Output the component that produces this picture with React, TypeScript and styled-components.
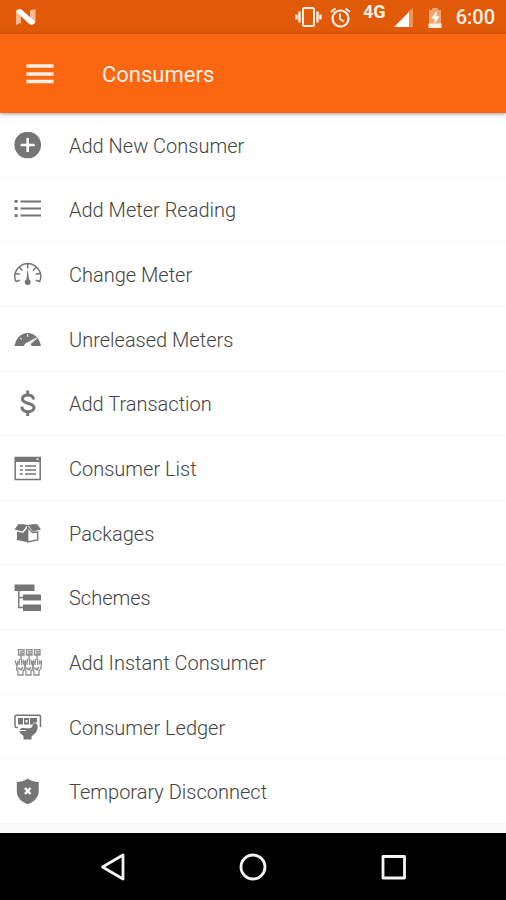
import React from "react";
import styled, { createGlobalStyle } from "styled-components";

const GlobalStyle = createGlobalStyle`
  * { box-sizing: border-box; }
  body {
    margin: 0;
    background: #fff;
    font-family: Roboto, "Liberation Sans", sans-serif;
  }
  button { font: inherit; border: 0; padding: 0; background: none; cursor: pointer; }
`;

const Screen = styled.div`
  display: flex;
  flex-direction: column;
  min-height: 100vh;
`;

const StatusBar = styled.div`
  display: flex;
  align-items: center;
  justify-content: space-between;
  height: 34px;
  padding: 0 11px 0 15px;
  background: #e05a09;
  color: #fff0e6;
`;

const StatusGroup = styled.div`
  display: flex;
  align-items: center;
`;

const StatusIcon = styled.svg<{ $gap?: number }>`
  display: block;
  flex: none;
  margin-right: ${(p) => p.$gap ?? 0}px;
`;

const Network = styled.span`
  align-self: flex-start;
  margin-right: 7px;
  font-size: 18px;
  line-height: 26px;
  font-weight: 700;
`;

const Clock = styled.time`
  font-size: 20px;
  line-height: 36px;
  font-weight: 500;
`;

const AppBar = styled.header`
  position: relative;
  display: flex;
  align-items: center;
  gap: 48px;
  height: 79px;
  padding: 0 26px;
  background: #fb6611;
  color: #fff0e6;
  box-shadow: 0 1px 4px rgba(0, 0, 0, 0.4);
`;

const MenuButton = styled.button`
  display: block;
  color: inherit;
  svg { display: block; }
`;

const Title = styled.h1`
  margin: 0;
  padding-top: 2px;
  font-size: 22px;
  line-height: 32px;
  font-weight: 400;
`;

const Main = styled.main`
  display: flex;
  flex: 1;
  padding-bottom: 9px;
  background: linear-gradient(#fff, #fff) content-box, #fafafa;
`;

const Menu = styled.ul`
  display: grid;
  grid-auto-rows: 1fr;
  flex: 1;
  margin: 0;
  padding: 0;
  list-style: none;
`;

const MenuItem = styled.li`
  display: flex;
  border-bottom: 1px solid #f4f4f4;
`;

const MenuRow = styled.button`
  display: flex;
  flex: 1;
  align-items: center;
  gap: 27px;
  padding: 2px 14px 0;
  color: #444;
  text-align: left;
`;

const Icon = styled.svg`
  display: block;
  flex: none;
  width: 28px;
  height: 28px;
  color: #757575;
`;

const Label = styled.span`
  font-size: 20px;
  line-height: 28px;
  font-weight: 300;
`;

const NavBar = styled.nav`
  display: flex;
  justify-content: center;
  height: 67px;
  background: #000;
`;

const NavButton = styled.button`
  display: flex;
  flex: 0 1 140px;
  align-items: center;
  justify-content: center;
  color: #f4f4f4;
`;

const hand = (x: number) => (
  <g key={x} transform={`translate(${x} 0)`}>
    <path d="M4.500 1.500h5.500v5.500H4.500zM7 7v5M6 3l3 3M9 3L6 6" />
    <path d="M1 12.500l2 6-.5 3 1.500 2v3.500h5v-4l2-3 .5-7-2 2.500v-3M3 18l1-5M5 17l.5-6M7.500 17l.3-6M4 20l3 2 2-3" />
    <path d="M3 19h6v3H4z" fill="currentColor" stroke="none" opacity="0.400" />
  </g>
);

const items: { label: string; icon: React.ReactNode }[] = [
  {
    label: "Add New Consumer",
    icon: (
      <>
        <circle cx="13.700" cy="13" r="13.300" fill="currentColor" />
        <path d="M13.700 6v14M6.700 13h14" stroke="#fff" strokeWidth="2.600" />
      </>
    ),
  },
  {
    label: "Add Meter Reading",
    icon: (
      <>
        <path d="M6.500 5.500H27M6.500 12.500H27M6.500 19.500H27" stroke="currentColor" strokeWidth="1.900" />
        <path d="M.5 5.300h3.200M.5 12.500h3.200M.5 19.700h3.200" stroke="currentColor" strokeWidth="2.800" />
      </>
    ),
  },
  {
    label: "Change Meter",
    icon: (
      <>
        <path
          d="M1.800 20.500C-.8 14 1.500 8 6.500 4.800a13.500 13.500 0 0 1 14.500 0c5 3.200 7.300 9.200 4.700 15.700l-4-1.300M1.800 20.500l4-1.300M1.500 12.500l4.300.7M5.500 6.500l3 3M13.700 3v4.500M22 6.500l-3 3M26 12.500l-4.300.7"
          fill="none"
          stroke="currentColor"
          strokeWidth="1.500"
        />
        <path d="M13.700 8l1.400 10.500a3 3 0 1 1-2.800 0z" fill="currentColor" />
      </>
    ),
  },
  {
    label: "Unreleased Meters",
    icon: (
      <>
        <path d="M.6 20C2 12 7 7 13.700 7S25.500 12 27 20h-9.500a4 4 0 0 0-1-2.500L23 11l-9 5.200c-2.200.2-3.600 1.600-4 3.800z" fill="currentColor" />
        <path d="M13.700 8v3M6 12l2 1.500M17 17.500l7-6.500" stroke="#fff" strokeWidth="1" />
      </>
    ),
  },
  {
    label: "Add Transaction",
    icon: (
      <path
        d="M13.700.5v5M13.700 21v5M19.500 9.500c-.2-3-2.400-4.600-5.700-4.600-3.200 0-5.300 1.500-5.300 4.100 0 5.700 11.500 3.300 11.500 8.500 0 2.500-2.500 4.200-6 4.200-3.800 0-6-1.800-6.300-5"
        fill="none"
        stroke="currentColor"
        strokeWidth="3"
      />
    ),
  },
  {
    label: "Consumer List",
    icon: (
      <>
        <path d="M1.200 2.500h25v22h-25z" fill="none" stroke="currentColor" strokeWidth="1.500" />
        <path d="M1 2h25.500v5H1z" fill="currentColor" />
        <path d="M22.500 4.300h2" stroke="#fff" strokeWidth="1.500" />
        <path d="M5.800 11h3M11 11h11M5.800 15h3M11 15h11M5.800 19h3M11 19h11" stroke="currentColor" strokeWidth="1.600" />
      </>
    ),
  },
  {
    label: "Packages",
    icon: (
      <>
        <path d="M4.500 4L13 5.500l-4.500 6L.5 9.500zM23 4L14.500 5.500 19 11.500l8-2z" fill="currentColor" />
        <path d="M3 11.500l6 1.500L13.700 7.500v14.800L3 20z" fill="currentColor" />
        <path d="M13.700 7v15l10-2V12L18.500 12.500z" fill="#fff" stroke="currentColor" strokeWidth="1.400" />
        <path d="M7 4.500l7 1.200L20.500 4.500" fill="none" stroke="currentColor" strokeWidth="1.200" />
      </>
    ),
  },
  {
    label: "Schemes",
    icon: (
      <>
        <path d="M.5.500h20v6.500H.5zM9 10.500h18v6H9zM9 20.500h18V27H9z" fill="currentColor" />
        <path d="M4.800 6v17.500H9M4.800 13.500H9" fill="none" stroke="currentColor" strokeWidth="1.400" />
      </>
    ),
  },
  {
    label: "Add Instant Consumer",
    icon: (
      <g fill="none" stroke="currentColor" strokeWidth="1.300" opacity="0.800" transform="translate(0 -1)">
        {[0, 8, 16].map(hand)}
      </g>
    ),
  },
  {
    label: "Consumer Ledger",
    icon: (
      <>
        <path d="M4 13.500H2.500a1.500 1.500 0 0 1-1.500-1.500V2.700a1.500 1.500 0 0 1 1.500-1.500h22.500a1.500 1.500 0 0 1 1.500 1.500V13" fill="none" stroke="currentColor" strokeWidth="1.500" />
        <path d="M4 4h5v6.500H4zM10 4h5v6.500h-5zM16 4h7v4.500h-3.500v2H16z" fill="currentColor" />
        <path d="M11.500 6h2v2.500h-2z" fill="#fff" />
        <path d="M6.500 14.500c4-1.500 7 .5 10-.5 2.500-.7 2-5 5-5 3.500 2 2 7 .5 9.500l-4.500 4V25.500H9.500v-3.500L6 19c-.8-2 0-3.500.5-4.500z" fill="currentColor" />
        <path d="M6 16.500h6" stroke="#fff" strokeWidth="1" />
      </>
    ),
  },
  {
    label: "Temporary Disconnect",
    icon: (
      <>
        <path d="M13.700.5c3 2.300 6.500 3.300 11 3.500v9c0 6.300-4.500 10.800-11 13.200C7.200 23.800 2.800 19.300 2.800 13V4c4.400-.2 7.900-1.200 10.900-3.500z" fill="currentColor" />
        <path d="M11 10l5.500 6M16.500 10L11 16" stroke="#fff" strokeWidth="2.500" />
      </>
    ),
  },
];

export default function App() {
  return (
    <Screen>
      <GlobalStyle />
      <StatusBar>
        <StatusIcon width="22" height="18" viewBox="0 0 22 18" aria-hidden="true">
          <path d="M1 3.500L6 2v13l-5 2zM15 2.500L20.500 1v13L15 16z" fill="#ffb98f" />
          <path d="M1 3.500C2 1 5 .3 7 2l13.500 12c-1.500 3-4.500 3.500-6.500 1.800z" fill="#fff" />
        </StatusIcon>
        <StatusGroup>
          <StatusIcon $gap={8} width="27" height="22" viewBox="0 0 27 22" fill="none" stroke="currentColor" aria-hidden="true">
            <rect x="8" y="2" width="11" height="18" rx="1.500" strokeWidth="2" />
            <path d="M4.500 5.500v11M22.500 5.500v11M1.500 8.500v5M25.500 8.500v5" strokeWidth="2.400" />
          </StatusIcon>
          <StatusIcon $gap={12} width="21" height="22" viewBox="0 0 21 22" fill="none" stroke="currentColor" aria-hidden="true">
            <circle cx="10.500" cy="12.500" r="8" strokeWidth="2.200" />
            <path d="M10 7.500v5.500l4 2.500M1 6L5.500 2.500M20 6L15.500 2.500" strokeWidth="2" />
          </StatusIcon>
          <Network>4G</Network>
          <StatusIcon $gap={14} width="21" height="20" viewBox="0 0 21 20" aria-hidden="true">
            <path d="M15 5l5-4v19h-5z" fill="#f2924f" />
            <path d="M1 20L16 5v15z" fill="#fff" />
          </StatusIcon>
          <StatusIcon $gap={14} width="14" height="21" viewBox="0 0 14 21" aria-hidden="true">
            <path d="M4 1h6v2h3v14H1V3h3z" fill="#f2a36e" />
            <path d="M.5 16.500h13V21H.5z" fill="#fff0e6" />
            <path d="M8.500 4L3.500 11.500h3V17l5-7.500h-3z" fill="#fff" />
          </StatusIcon>
          <Clock>6:00</Clock>
        </StatusGroup>
      </StatusBar>
      <AppBar>
        <MenuButton aria-label="Open menu">
          <svg width="28" height="24" viewBox="0 0 28 24" aria-hidden="true">
            <path d="M.5 4h27M.5 12h27M.5 19.500h27" stroke="currentColor" strokeWidth="3.500" />
          </svg>
        </MenuButton>
        <Title>Consumers</Title>
      </AppBar>
      <Main>
        <Menu>
          {items.map((item) => (
            <MenuItem key={item.label}>
              <MenuRow>
                <Icon viewBox="0 0 28 28" aria-hidden="true">{item.icon}</Icon>
                <Label>{item.label}</Label>
              </MenuRow>
            </MenuItem>
          ))}
        </Menu>
      </Main>
      <NavBar>
        <NavButton aria-label="Back">
          <svg width="28" height="28" viewBox="0 0 28 28" fill="none" stroke="currentColor" strokeWidth="2.800" strokeLinejoin="round">
            <path d="M24 2v24L3.500 14z" />
          </svg>
        </NavButton>
        <NavButton aria-label="Home">
          <svg width="28" height="28" viewBox="0 0 28 28" fill="none" stroke="currentColor" strokeWidth="2.800">
            <circle cx="14" cy="14" r="12" />
          </svg>
        </NavButton>
        <NavButton aria-label="Recent apps">
          <svg width="28" height="28" viewBox="0 0 28 28" fill="none" stroke="currentColor" strokeWidth="2.800" strokeLinejoin="round">
            <rect x="4" y="3.500" width="21.500" height="21.500" />
          </svg>
        </NavButton>
      </NavBar>
    </Screen>
  );
}
